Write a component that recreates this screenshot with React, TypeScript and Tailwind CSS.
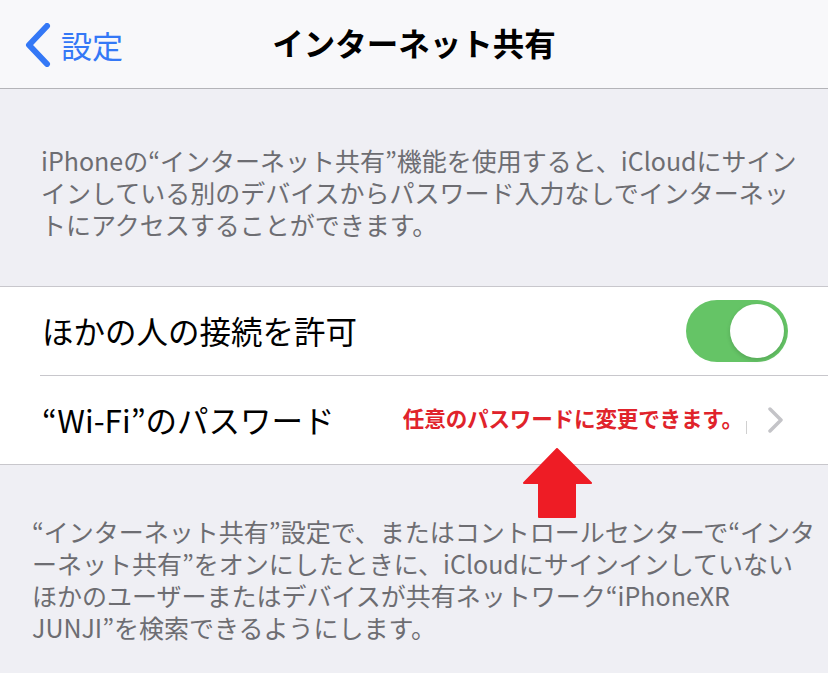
import React from "react";

const FONT = "font-['Noto_Sans_CJK_JP','Noto_Sans',sans-serif]";

function BackChevron() {
  return (
    <svg width="26" height="44" viewBox="0 0 26 44" className="shrink-0">
      <polyline
        points="22,3 4,22 22,41"
        fill="none"
        stroke="#3478f6"
        strokeWidth="6"
        strokeLinecap="round"
        strokeLinejoin="round"
      />
    </svg>
  );
}

function Chevron() {
  return (
    <svg width="18" height="26" viewBox="0 0 18 26" className="shrink-0">
      <polyline
        points="3,2 14,13 3,24"
        fill="none"
        stroke="#c4c4c8"
        strokeWidth="3.5"
        strokeLinecap="round"
        strokeLinejoin="round"
      />
    </svg>
  );
}

function Toggle() {
  return (
    <div className="w-[102px] h-[62px] rounded-full bg-[#65c466] flex items-center justify-end p-[4px] shrink-0">
      <div className="w-[54px] h-[54px] rounded-full bg-white shadow-[0_2px_4px_rgba(0,0,0,0.15)]" />
    </div>
  );
}

export default function App() {
  return (
    <div className={`relative w-[828px] h-[673px] overflow-hidden bg-[#efeff4] ${FONT}`}>
      {/* Navigation bar */}
      <div className="h-[89px] bg-[#f8f8fa] border-b border-[#b4b4b8] grid grid-cols-[1fr_auto_1fr] items-center">
        <div className="flex items-center pl-[25px] gap-[10px] pt-[1px]">
          <BackChevron />
          <span className="text-[31px] leading-none text-[#3478f6]">設定</span>
        </div>
        <div className="text-[31.5px] font-bold text-black leading-none pb-[2px]">インターネット共有</div>
        <div />
      </div>

      {/* Header description */}
      <div className="pt-[55px] pb-[46px] pl-[41px] text-[25px] leading-[32px] text-[#6d6d72]">
        <div className="whitespace-nowrap">iPhoneの“インターネット共有”機能を使用すると、iCloudにサイン</div>
        <div className="whitespace-nowrap">インしている別のデバイスからパスワード入力なしでインターネッ</div>
        <div className="whitespace-nowrap">トにアクセスすることができます。</div>
      </div>

      {/* Group */}
      <div className="bg-white border-t border-b border-[#c8c7cc]">
        <div className="h-[88px] flex items-center justify-between pl-[42px] pr-[40px]">
          <span className="text-[31.5px] text-black leading-none">ほかの人の接続を許可</span>
          <Toggle />
        </div>
        <div className="ml-[40px] border-t border-[#c8c7cc]">
          <div className="h-[88px] flex items-center pl-[2px] pr-[43px]">
            <span className="text-[31.5px] text-black leading-none whitespace-nowrap">“Wi-Fi”のパスワード</span>
            <div className="ml-auto flex items-center">
              <span className="text-[21.6px] font-bold text-[#e0232b] leading-none whitespace-nowrap mb-[4px] tracking-[-0.2px]">
                任意のパスワードに変更できます。
              </span>
              <span className="w-px h-[13px] bg-[#d0d0d0] ml-[3px] mt-[14px]" />
              <span className="ml-[20px] flex">
                <Chevron />
              </span>
            </div>
          </div>
        </div>
      </div>

      {/* Footer */}
      <div className="pt-[50px] pl-[32px] text-[25px] leading-[32px] text-[#6d6d72]">
        <div className="whitespace-nowrap">“インターネット共有”設定で、またはコントロールセンターで“インタ</div>
        <div className="whitespace-nowrap">ーネット共有”をオンにしたときに、iCloudにサインインしていない</div>
        <div className="whitespace-nowrap">ほかのユーザーまたはデバイスが共有ネットワーク“iPhoneXR</div>
        <div className="whitespace-nowrap">JUNJI”を検索できるようにします。</div>
      </div>

      {/* Red arrow annotation */}
      <svg
        className="absolute left-[523px] top-[448px]"
        width="70"
        height="71"
        viewBox="0 0 70 71"
      >
        <polygon
          points="34,1 68,35 52,35 52,69 16,69 16,35 1,35"
          fill="#ee1c25"
          stroke="#ee1c25"
          strokeWidth="2"
          strokeLinejoin="round"
        />
      </svg>
    </div>
  );
}
